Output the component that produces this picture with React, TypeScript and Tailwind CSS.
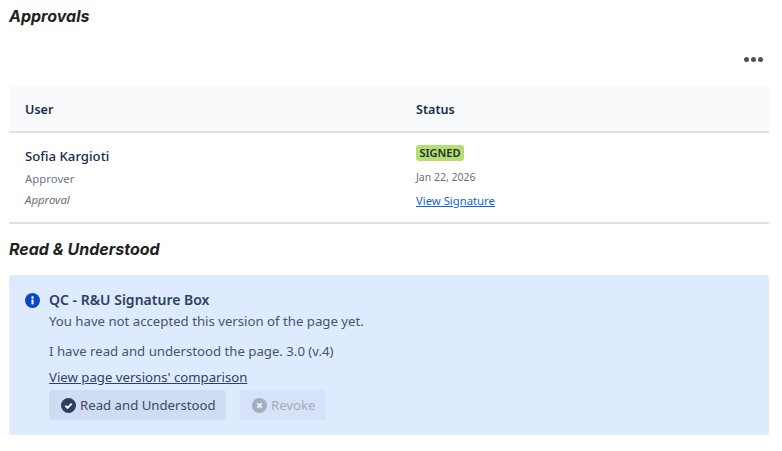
import React from 'react';

const sans = "font-['Noto_Sans',sans-serif]";

const App: React.FC = () => {
  return (
    <div className={`w-[782px] h-[451px] bg-white overflow-hidden pl-[9px] pr-[13px] ${sans}`}>
      <h2 className="h-[32px] flex items-center font-['Inter',sans-serif] font-[650] italic text-base text-[#1f1f1f]">
        Approvals
      </h2>

      <div className="h-[55px] flex items-center justify-end pr-[6px] gap-[2px]">
        <span className="w-[5px] h-[5px] rounded-full bg-[#505258]" />
        <span className="w-[5px] h-[5px] rounded-full bg-[#505258]" />
        <span className="w-[5px] h-[5px] rounded-full bg-[#505258]" />
      </div>

      <div className="grid grid-cols-[391px_369px] h-[46px] bg-[#f9fafc] border-b-2 border-[#dfdfe8] text-[12.6px] font-semibold text-[#172b4d]">
        <div className="pl-4 pt-[2px] flex items-center">User</div>
        <div className="pl-4 pt-[2px] flex items-center">Status</div>
      </div>

      <div className="grid grid-cols-[391px_369px] h-[91px] border-b-2 border-[#dfdfe8]">
        <div className="pl-4 pt-[13px]">
          <div className="text-[13.2px] leading-[20px] font-[550] text-[#172b4d]">Sofia Kargioti</div>
          <div className="text-[11.4px] leading-[16px] mt-[5px] text-[#6b778c]">Approver</div>
          <div className="text-[11.4px] leading-[16px] mt-[5px] italic text-[#6b6e76]">Approval</div>
        </div>
        <div className="pl-4 pt-[12px]">
          <span className="flex items-center justify-center w-[48px] h-[16px] rounded-[3px] bg-[#b3df72] text-[11px] font-semibold text-[#292a2e]">
            SIGNED
          </span>
          <div className="text-[10.5px] leading-[14px] mt-[9px] text-[#6b6e76]">Jan 22, 2026</div>
          <a href="#" className="block w-fit text-[11.3px] leading-[16px] mt-[9px] text-[#0c66e4] underline">
            View Signature
          </a>
        </div>
      </div>

      <h2 className="h-[51px] pb-[2px] flex items-center font-['Inter',sans-serif] font-[650] italic text-base text-[#1f1f1f]">
        Read &amp; Understood
      </h2>

      <div className="h-[160px] rounded-[3px] bg-[#deebff] pl-4 pt-4 flex gap-[9px] text-[13.2px] text-[#44546f]">
        <svg width="15" height="15" viewBox="0 0 16 16" className="mt-[2px] shrink-0">
          <circle cx="8" cy="8" r="8" fill="#0747c6" />
          <rect x="6.9" y="7" width="2.2" height="5.2" fill="#fff" />
          <circle cx="8" cy="4.7" r="1.3" fill="#fff" />
        </svg>
        <div className="flex flex-col items-start">
          <div className="text-[14px] leading-[18px] font-semibold text-[#2f3f63]">QC - R&amp;U Signature Box</div>
          <div className="leading-[20px] mt-[2px]">You have not accepted this version of the page yet.</div>
          <div className="leading-[20px] mt-[10px]">I have read and understood the page. 3.0 (v.4)</div>
          <a href="#" className="leading-[20px] mt-[6px] underline text-[#2f3f63]">
            View page versions' comparison
          </a>
          <div className="flex gap-[14px] mt-[3px]">
            <button className="h-[30px] w-[177px] rounded-[3px] bg-[#cfdcf1] flex items-center pl-3 gap-[4px] text-[#3a4a6b]">
              <svg width="15" height="15" viewBox="0 0 16 16" className="shrink-0">
                <circle cx="8" cy="8" r="8" fill="#2f3f63" />
                <path d="M4.6 8.2 7 10.6 11.4 5.9" fill="none" stroke="#fff" strokeWidth="2" />
              </svg>
              <span className="pt-[2px]">Read and Understood</span>
            </button>
            <button className="h-[30px] w-[86px] rounded-[3px] bg-[#d5e2f7] flex items-center pl-3 gap-[4px] text-[#a5adba]">
              <svg width="15" height="15" viewBox="0 0 16 16" className="shrink-0">
                <circle cx="8" cy="8" r="8" fill="#a5adba" />
                <path d="M5.6 5.6 10.4 10.4M10.4 5.6 5.6 10.4" fill="none" stroke="#e6eefb" strokeWidth="1.9" />
              </svg>
              <span className="pt-[2px]">Revoke</span>
            </button>
          </div>
        </div>
      </div>
    </div>
  );
};

export default App;
